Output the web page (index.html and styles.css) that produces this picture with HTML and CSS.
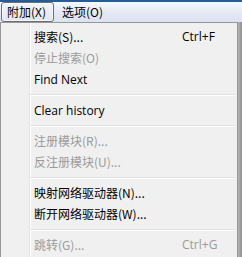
FILE: index.html
```html
<!DOCTYPE html>
<html>
<head>
<meta charset="utf-8">
<link rel="stylesheet" href="styles.css">
</head>
<body>
<div class="titlestrip"></div>
<div class="menubar">
  <div class="mb-item active">附加(X)</div>
  <div class="mb-item">选项(O)</div>
</div>
<div class="dropwrap">
  <div class="menu">
    <div class="item"><span class="label">搜索(S)...</span><span class="key">Ctrl+F</span></div>
    <div class="item disabled"><span class="label">停止搜索(O)</span></div>
    <div class="item latin"><span class="label">Find Next</span></div>
    <div class="sep"></div>
    <div class="item latin"><span class="label">Clear history</span></div>
    <div class="sep"></div>
    <div class="item disabled"><span class="label">注册模块(R)...</span></div>
    <div class="item disabled"><span class="label">反注册模块(U)...</span></div>
    <div class="sep"></div>
    <div class="item"><span class="label">映射网络驱动器(N)...</span></div>
    <div class="item"><span class="label">断开网络驱动器(W)...</span></div>
    <div class="sep"></div>
    <div class="item disabled"><span class="label">跳转(G)...</span><span class="key">Ctrl+G</span></div>
  </div>
  <div class="edge"></div>
</div>
</body>
</html>
```
FILE: styles.css
```css
html, body {
  margin: 0;
  padding: 0;
}
body {
  width: 242px;
  height: 257px;
  overflow: hidden;
  background: #f0f0f0;
  font-family: "Noto Sans CJK SC", "Noto Sans", sans-serif;
  font-size: 12px;
  color: #000;
}
.titlestrip {
  height: 2px;
  background: #2a5b93;
}
.menubar {
  height: 20px;
  display: flex;
  align-items: stretch;
  background: linear-gradient(to bottom, #f6f8fc 0%, #e6ebf5 45%, #dbe2f1 100%);
  padding-left: 1px;
}
.mb-item {
  display: flex;
  align-items: center;
  padding: 0 7px;
  line-height: 1;
  border: 1px solid transparent;
  border-radius: 3px;
}
.mb-item.active {
  border-color: #6e6e6e;
  background: linear-gradient(to bottom, #f4f4f4, #e2e6ee);
  padding: 0 7px 0 5px;
  box-shadow: inset 0 0 0 1px rgba(255,255,255,0.6);
}
.dropwrap {
  display: flex;
  height: 235px;
}
.menu {
  border: 1px solid #979797;
  border-bottom: none;
  padding: 3px 2px 0 2px;
  box-sizing: border-box;
  width: 238px;
  background:
    linear-gradient(to right, transparent 28px, #e2e3e3 28px, #e2e3e3 29px, #ffffff 29px, #ffffff 30px, transparent 30px),
    #f0f0f0;
}
.edge {
  width: 4px;
  background: linear-gradient(to right, #b5b5b5, #8f8f8f);
}
.item {
  display: flex;
  align-items: center;
  height: 21px;
  padding-left: 31px;
  white-space: nowrap;
}
.item.latin .label {
  font-family: "Open Sans", "Noto Sans", sans-serif;
  position: relative;
  top: 1px;
}
.item.disabled {
  color: #9a9a9a;
}
.key {
  margin-left: auto;
  width: 53px;
  font-family: "Open Sans", "Noto Sans", sans-serif;
}
.sep {
  margin: 5px 0 3px 27px;
  height: 0;
  border-top: 1px solid #e0e0e0;
  border-bottom: 1px solid #ffffff;
}
```
